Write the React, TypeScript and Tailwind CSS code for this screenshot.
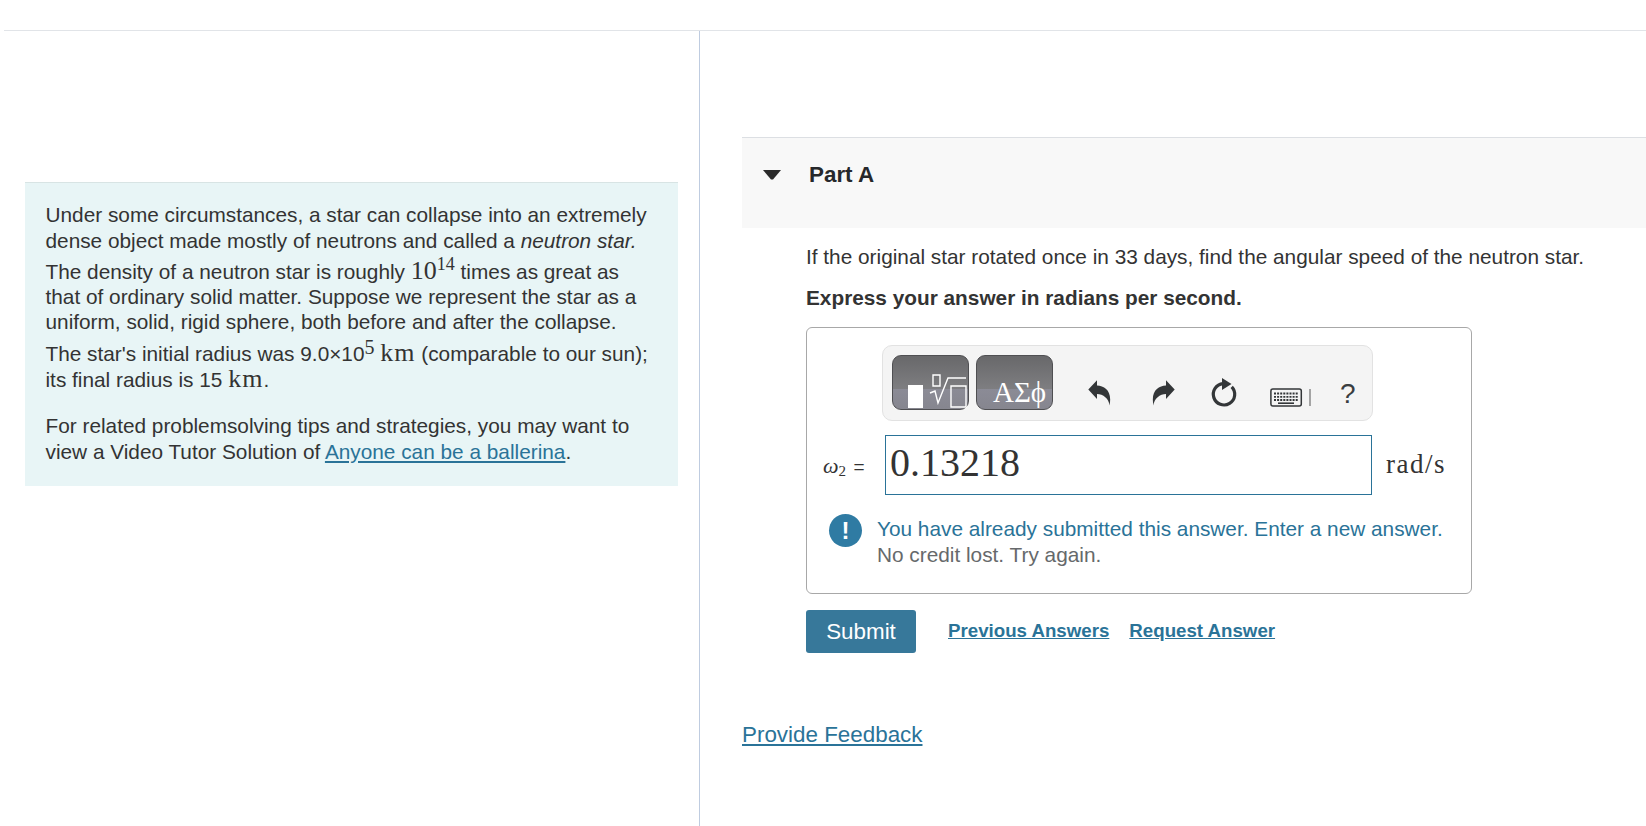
import React from "react";

const sans = "font-['Liberation_Sans',Arial,sans-serif]";
const serif = "font-['Liberation_Serif','Times_New_Roman',serif]";
const btn =
  "h-[55px] w-[77px] shrink-0 rounded-[9px] border border-[#4f4f52] bg-[linear-gradient(#68686a,#7e7e81_62%,#8b8b96_63%,#86868f)]";

function Km() {
  return <span className={`${serif} text-[26px] leading-none tracking-[1px]`}>km</span>;
}

function Arrow({ flip }: { flip?: boolean }) {
  return (
    <svg width="24" height="26" viewBox="0 0 24 26" className={flip ? "-scale-x-100" : ""}>
      <path d="M0.3 9.5 L9 0.3 V5.5 C17 6 24.5 11 21.5 25.5 C21 18.5 15 14 9 14 V19 Z" fill="#333638" />
    </svg>
  );
}

function Reset() {
  return (
    <svg width="30" height="32" viewBox="0 0 30 32">
      <path d="M13 6.6 A10.7 10.7 0 1 0 21.7 9.8" fill="none" stroke="#333638" strokeWidth="3.2" />
      <path d="M12 1 L21.5 7 L12 13 Z" fill="#333638" />
    </svg>
  );
}

function Keyboard() {
  return (
    <svg width="41" height="20" viewBox="0 0 41 20">
      <rect x="0.9" y="1" width="30.4" height="17" rx="2" fill="#f4f4f4" stroke="#333638" strokeWidth="1.5" />
      <path d="M4 5.5 H28 M4 8.8 H28 M4 12 H28" stroke="#333638" strokeWidth="1.8" strokeDasharray="2 1.1" />
      <path d="M8 15.2 H24" stroke="#333638" strokeWidth="1.6" />
      <path d="M40 1 V18" stroke="#555" strokeWidth="1" />
    </svg>
  );
}

function Line({ children, extra }: { children: React.ReactNode; extra?: boolean }) {
  return <div className={`h-[25.6px] whitespace-nowrap ${extra ? "mt-[5px]" : ""}`}>{children}</div>;
}

export default function App() {
  return (
    <div className={`${sans} h-[826px] w-[1646px] overflow-hidden bg-white text-[20.8px] text-[#333]`}>
      <div className="flex h-full flex-col pt-[30px] pl-[4px]">
        <div className="flex h-full border-t border-[#e1e4e8]">
          <div className="w-[696px] shrink-0 border-r border-[#bfcce0] pt-[151px] pl-[21px]">
            <div className="h-[304px] w-[653px] border-t border-[#d8e4e4] bg-[#e8f5f6] pt-[19px] pr-[20px] pl-[20.5px] leading-[25.6px]">
              <Line>Under some circumstances, a star can collapse into an extremely</Line>
              <Line>
                dense object made mostly of neutrons and called a <em>neutron star.</em>
              </Line>
              <Line extra>
                The density of a neutron star is roughly{" "}
                <span className={`${serif} text-[26px] leading-none`}>
                  10<sup className="text-[18px]">14</sup>
                </span>{" "}
                times as great as
              </Line>
              <Line>that of ordinary solid matter. Suppose we represent the star as a</Line>
              <Line>uniform, solid, rigid sphere, both before and after the collapse.</Line>
              <Line extra>
                The star's initial radius was 9.0×10
                <sup className={`${serif} top-[-7px] text-[20px]`}>5</sup> <Km /> (comparable to our sun);
              </Line>
              <Line>
                its final radius is 15 <Km />.
              </Line>
              <div className="mt-[22px]">
                <Line>For related problemsolving tips and strategies, you may want to</Line>
                <Line>
                  view a Video Tutor Solution of <a className="text-[#2a7398] underline">Anyone can be a ballerina</a>.
                </Line>
              </div>
            </div>
          </div>
          <div className="min-w-0 flex-1 pt-[106px] pl-[42px]">
            <div className="flex h-[91px] items-start border-t border-[#dcdfe3] bg-[#f8f8f8] pt-[22px] pl-[21px]">
              <svg width="18" height="10" viewBox="0 0 18 10" className="mt-[10px]">
                <path d="M0 0 H18 L10 9.5 H8 Z" fill="#2a2a2a" />
              </svg>
              <h2 className="ml-[28px] text-[22.4px] leading-[29px] font-bold text-[#26282b]">Part A</h2>
            </div>
            <div className="pl-[64px]">
              <p className="mt-[16px] leading-[26px]">
                If the original star rotated once in 33 days, find the angular speed of the neutron star.
              </p>
              <p className="mt-[15px] leading-[26px] font-bold">Express your answer in radians per second.</p>
              <div className="mt-[16px] h-[267px] w-[666px] rounded-[6px] border border-[#a8a8a8] pt-[17px]">
                <div className="ml-[75px] flex h-[76px] w-[491px] items-start rounded-[10px] border border-[#e2e2e2] bg-[#f4f4f4] pt-[9px] pl-[9px]">
                  <div className={`${btn} relative`}>
                    <div className="absolute top-[29px] left-[15px] h-[23px] w-[15px] bg-white" />
                    <svg className="absolute top-[17px] left-[35px]" width="40" height="36" viewBox="0 0 40 36">
                      <path
                        d="M2 20 L7 18 L10 30 L20 5 H38 M5 2 H12 V13 H5 Z M23 13 H38 V34 H23 Z"
                        fill="none"
                        stroke="#fff"
                        strokeWidth="1.4"
                      />
                    </svg>
                  </div>
                  <div
                    className={`${btn} ${serif} ml-[7px] pt-[20px] pl-[16px] text-[29px] leading-[32px] whitespace-nowrap text-white`}
                  >
                    ΑΣϕ
                  </div>
                  <div className="mt-[25px] ml-[35px]">
                    <Arrow />
                  </div>
                  <div className="mt-[25px] ml-[39px]">
                    <Arrow flip />
                  </div>
                  <div className="mt-[22px] ml-[35px]">
                    <Reset />
                  </div>
                  <div className="mt-[33px] ml-[30px]">
                    <Keyboard />
                  </div>
                  <span className="mt-[23px] ml-[29px] text-[28px] leading-[32px] text-[#3a3d40]">?</span>
                </div>
                <div className="mt-[14px] flex items-center pl-[16px]">
                  <span className={`${serif} w-[62px] text-[22px] whitespace-nowrap text-[#333]`}>
                    <i>ω</i>
                    <sub className="text-[15px]">2</sub>{" "}
                    <span className={`${sans} ml-[2px] text-[19px]`}>=</span>
                  </span>
                  <div
                    className={`${serif} flex h-[60px] w-[487px] items-center border border-[#2a7398] pb-[4px] pl-[4px] text-[40px] leading-none text-[#333]`}
                  >
                    0.13218
                  </div>
                  <span className={`${serif} mb-[2px] ml-[14px] text-[27px] tracking-[1.5px] text-[#333]`}>rad/s</span>
                </div>
                <div className="mt-[14px] ml-[22px] flex">
                  <div className="mt-[5px] flex h-[33px] w-[33px] items-center justify-center rounded-full bg-[#2f7ba3] text-[24px] font-bold text-white">
                    !
                  </div>
                  <div className="mt-[7px] ml-[15px] leading-[26px]">
                    <div className="text-[#2a7398]">You have already submitted this answer. Enter a new answer.</div>
                    <div className="text-[#66696b]">No credit lost. Try again.</div>
                  </div>
                </div>
              </div>
              <div className="mt-[16px] flex items-center">
                <button className="h-[43px] w-[110px] rounded-[3px] bg-[#37789a] text-[22.4px] text-white">Submit</button>
                <a className="ml-[32px] text-[18.7px] font-bold text-[#2a7398] underline">Previous Answers</a>
                <a className="ml-[20px] text-[18.7px] font-bold text-[#2a7398] underline">Request Answer</a>
              </div>
            </div>
            <a className="mt-[67px] block text-[22.4px] leading-[30px] text-[#2a7398] underline">Provide Feedback</a>
          </div>
        </div>
      </div>
    </div>
  );
}
